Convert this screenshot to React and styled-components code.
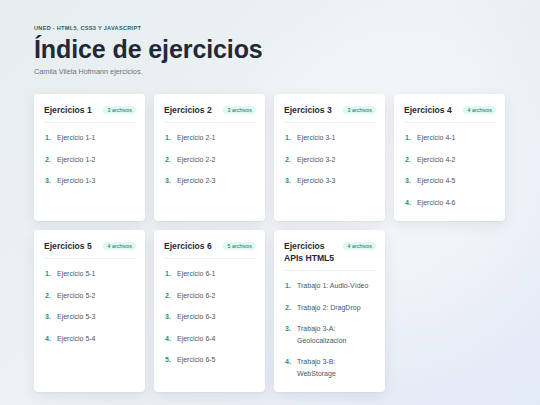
import styled, { createGlobalStyle } from 'styled-components';

const GlobalStyle = createGlobalStyle`
  html, body {
    margin: 0;
    padding: 0;
  }
  body {
    font-family: "Liberation Sans", Arial, sans-serif;
    background: #eceff3;
  }
`;

const Page = styled.div`
  width: 540px;
  min-height: 405px;
  box-sizing: border-box;
  padding: 25px 34px 12px;
  background:
    radial-gradient(circle at 75% 45%, rgba(255, 255, 255, 0.55), transparent 45%),
    linear-gradient(135deg, #e6eeef 0%, #eef1f5 45%, #e3eaf7 100%);
`;

const Eyebrow = styled.div`
  font-size: 5.6px;
  font-weight: 700;
  letter-spacing: 0.05em;
  text-transform: uppercase;
  color: #2f5f5c;
`;

const Title = styled.h1`
  margin: 3px 0 0;
  font-size: 25px;
  line-height: 30px;
  font-weight: 700;
  color: #1f2937;
  letter-spacing: -0.1px;
`;

const Subtitle = styled.p`
  margin: 3px 0 0;
  font-size: 7.3px;
  color: #6b7280;
`;

const Grid = styled.div`
  margin-top: 18px;
  display: grid;
  grid-template-columns: repeat(4, 111px);
  gap: 9px;
`;

const Card = styled.div`
  background: #fff;
  border-radius: 4px;
  padding: 10px 9px 8px 10px;
  box-shadow: 0 4px 14px rgba(30, 41, 59, 0.08), 0 1px 2px rgba(30, 41, 59, 0.05);
`;

const CardHead = styled.div`
  display: flex;
  justify-content: space-between;
  align-items: flex-start;
  gap: 6px;
  padding-bottom: 6px;
  border-bottom: 1px solid #eceff2;
`;

const CardTitle = styled.h2`
  margin: 0;
  font-size: 8.6px;
  line-height: 12px;
  font-weight: 700;
  color: #1f2937;
`;

const Badge = styled.span`
  flex: none;
  font-size: 5.4px;
  line-height: 8px;
  padding: 0 4px;
  border-radius: 6px;
  background: #dff8f2;
  color: #1f6f66;
  margin-top: 2px;
`;

const List = styled.ol`
  list-style: none;
  margin: 4px 0 0;
  padding: 0;
`;

const Item = styled.li`
  display: flex;
  padding: 5px 4px 5px 0;
  font-size: 7px;
  line-height: 11.5px;
  color: #4b5563;
`;

const Num = styled.span`
  flex: none;
  width: 12px;
  margin-left: 1px;
  font-weight: 700;
  color: #2a8f82;
`;

const groups = [
  { title: 'Ejercicios 1', items: ['Ejercicio 1-1', 'Ejercicio 1-2', 'Ejercicio 1-3'] },
  { title: 'Ejercicios 2', items: ['Ejercicio 2-1', 'Ejercicio 2-2', 'Ejercicio 2-3'] },
  { title: 'Ejercicios 3', items: ['Ejercicio 3-1', 'Ejercicio 3-2', 'Ejercicio 3-3'] },
  { title: 'Ejercicios 4', items: ['Ejercicio 4-1', 'Ejercicio 4-2', 'Ejercicio 4-5', 'Ejercicio 4-6'] },
  { title: 'Ejercicios 5', items: ['Ejercicio 5-1', 'Ejercicio 5-2', 'Ejercicio 5-3', 'Ejercicio 5-4'] },
  {
    title: 'Ejercicios 6',
    items: ['Ejercicio 6-1', 'Ejercicio 6-2', 'Ejercicio 6-3', 'Ejercicio 6-4', 'Ejercicio 6-5'],
  },
  {
    title: 'Ejercicios APIs HTML5',
    items: ['Trabajo 1: Audio-Vídeo', 'Trabajo 2: DragDrop', 'Trabajo 3-A: Geolocalización', 'Trabajo 3-B: WebStorage'],
  },
];

const App = () => (
  <>
    <GlobalStyle />
    <Page>
      <Eyebrow>UNED - HTML5, CSS3 y JavaScript</Eyebrow>
      <Title>Índice de ejercicios</Title>
      <Subtitle>Camila Vilela Hofmann ejercicios.</Subtitle>
      <Grid>
        {groups.map((g) => (
          <Card key={g.title}>
            <CardHead>
              <CardTitle>{g.title}</CardTitle>
              <Badge>{g.items.length} archivos</Badge>
            </CardHead>
            <List>
              {g.items.map((it, i) => (
                <Item key={it}>
                  <Num>{i + 1}.</Num>
                  <span>{it}</span>
                </Item>
              ))}
            </List>
          </Card>
        ))}
      </Grid>
    </Page>
  </>
);

export default App;
